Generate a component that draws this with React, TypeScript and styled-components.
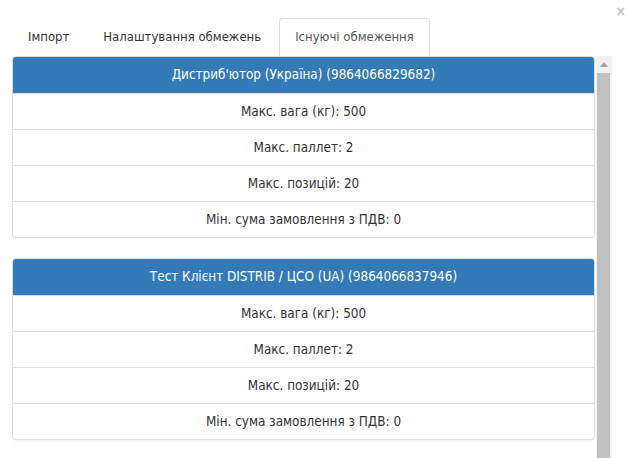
import React from "react";
import styled, { createGlobalStyle } from "styled-components";

const GlobalStyle = createGlobalStyle`
  html, body {
    margin: 0;
    padding: 0;
    background: #fff;
    overflow: hidden;
  }
  body {
    font-family: "DejaVu Sans Condensed", "DejaVu Sans", sans-serif;
    font-size: 13px;
    color: #333;
  }
`;

type Limit = { label: string; value: string };
type Client = { title: string; limits: Limit[] };

const clients: Client[] = [
  {
    title: "Дистриб'ютор (Україна) (9864066829682)",
    limits: [
      { label: "Макс. вага (кг)", value: "500" },
      { label: "Макс. паллет", value: "2" },
      { label: "Макс. позицій", value: "20" },
      { label: "Мін. сума замовлення з ПДВ", value: "0" },
    ],
  },
  {
    title: "Тест Клієнт DISTRIB / ЦСО (UA) (9864066837946)",
    limits: [
      { label: "Макс. вага (кг)", value: "500" },
      { label: "Макс. паллет", value: "2" },
      { label: "Макс. позицій", value: "20" },
      { label: "Мін. сума замовлення з ПДВ", value: "0" },
    ],
  },
];

const tabs = ["Імпорт", "Налаштування обмежень", "Існуючі обмеження"];

const App: React.FC = () => {
  return (
    <>
      <GlobalStyle />
      <Dialog>
        <Close>×</Close>
        <Tabs>
          {tabs.map((t, i) => (
            <Tab key={t} $active={i === 2}>
              {t}
            </Tab>
          ))}
        </Tabs>
        <ScrollArea>
          <List>
            {clients.map((c) => (
              <Panel key={c.title}>
                <PanelHeader>{c.title}</PanelHeader>
                {c.limits.map((l) => (
                  <Row key={l.label}>
                    {l.label}: {l.value}
                  </Row>
                ))}
              </Panel>
            ))}
          </List>
          <ScrollBar>
            <ScrollButton>
              <svg width="8" height="5" viewBox="0 0 8 5">
                <polygon points="4,0 8,5 0,5" fill="#a3a3a3" />
              </svg>
            </ScrollButton>
            <Thumb />
          </ScrollBar>
        </ScrollArea>
      </Dialog>
    </>
  );
};

export default App;

const Dialog = styled.div`
  position: relative;
  padding: 18px 19px 0 12px;
`;

const Close = styled.span`
  position: absolute;
  top: 4px;
  right: 5px;
  font-size: 14px;
  font-weight: bold;
  line-height: 14px;
  color: #c4c4c4;
  cursor: pointer;
`;

const Tabs = styled.div`
  display: flex;
`;

const Tab = styled.div<{ $active?: boolean }>`
  margin-right: 2px;
  padding: 10px 15px 11px;
  line-height: 16px;
  border: 1px solid ${(p) => (p.$active ? "#ddd" : "transparent")};
  border-bottom: none;
  border-radius: 4px 4px 0 0;
  color: ${(p) => (p.$active ? "#555" : "#333")};
  background: #fff;
`;

const ScrollArea = styled.div`
  display: flex;
  height: 440px;
  overflow: hidden;
`;

const List = styled.div`
  flex: 1;
  min-width: 0;
  padding-right: 1px;
`;

const ScrollBar = styled.div`
  width: 16px;
  flex: none;
  display: flex;
  flex-direction: column;
  background: #f1f1f1;
`;

const ScrollButton = styled.div`
  height: 17px;
  display: flex;
  align-items: center;
  justify-content: center;
  padding-right: 1px;
`;

const Thumb = styled.div`
  flex: 1;
  margin: 0 2px 20px 1px;
  background: #c1c1c1;
`;

const Panel = styled.div`
  border: 1px solid #ddd;
  border-radius: 4px;
  margin-bottom: 20px;
  background: #fff;
  overflow: hidden;
  box-shadow: 0 1px 1px rgba(0, 0, 0, 0.05);
  font-size: 13.4px;
`;

const PanelHeader = styled.div`
  background: #337ab7;
  color: #fff;
  text-align: center;
  padding: 10px 15px;
  line-height: 17px;
  margin: -1px -1px 0;
  border-radius: 3px 3px 0 0;
`;

const Row = styled.div`
  text-align: center;
  padding: 10px 15px;
  line-height: 15px;
  border-top: 1px solid #ddd;
  &:first-of-type {
    border-top: none;
  }
`;
